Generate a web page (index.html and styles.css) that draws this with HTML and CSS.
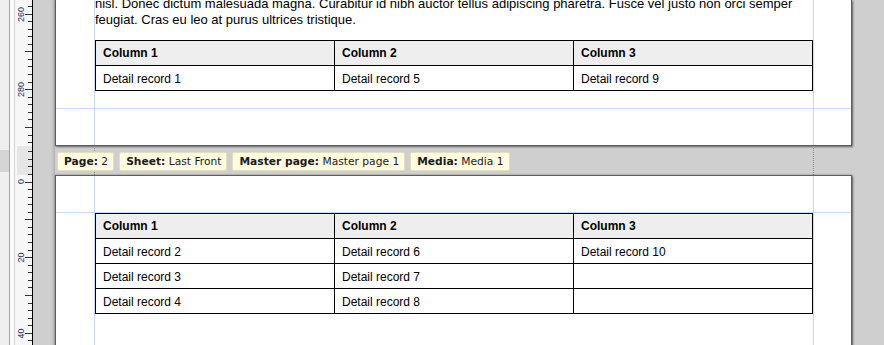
FILE: index.html
```html
<!DOCTYPE html>
<html lang="en">
<head>
<meta charset="utf-8">
<title>Report preview</title>
<link rel="stylesheet" href="styles.css">
</head>
<body>
<div class="app">
  <aside class="side">
    <div class="strip"><div class="strip-box"></div></div>
    <svg class="ruler" width="23" height="345" viewBox="0 0 23 345" xmlns="http://www.w3.org/2000/svg">
      <rect x="0" y="0" width="4" height="345" fill="#fbfbfb"/>
      <rect x="4" y="0" width="1" height="345" fill="#d3d3d3"/>
      <rect x="5" y="0" width="17" height="345" fill="#f7f7f7"/>
      <rect x="7" y="146" width="15" height="29" fill="#e6e6e6"/>
      <rect x="22" y="0" width="1" height="345" fill="#000"/>
      <g stroke="#333" stroke-width="1">
        <line x1="18" y1="6.5" x2="22" y2="6.5"/>
        <line x1="15" y1="14.5" x2="22" y2="14.5"/>
        <line x1="18" y1="21.5" x2="22" y2="21.5"/>
        <line x1="18" y1="29.5" x2="22" y2="29.5"/>
        <line x1="18" y1="36.5" x2="22" y2="36.5"/>
        <line x1="18" y1="44.5" x2="22" y2="44.5"/>
        <line x1="15" y1="51.5" x2="22" y2="51.5"/>
        <line x1="18" y1="59.5" x2="22" y2="59.5"/>
        <line x1="18" y1="66.5" x2="22" y2="66.5"/>
        <line x1="18" y1="74.5" x2="22" y2="74.5"/>
        <line x1="18" y1="82.5" x2="22" y2="82.5"/>
        <line x1="15" y1="89.5" x2="22" y2="89.5"/>
        <line x1="18" y1="97.5" x2="22" y2="97.5"/>
        <line x1="18" y1="104.5" x2="22" y2="104.5"/>
        <line x1="18" y1="112.5" x2="22" y2="112.5"/>
        <line x1="18" y1="119.5" x2="22" y2="119.5"/>
        <line x1="15" y1="127.5" x2="22" y2="127.5"/>
        <line x1="18" y1="135.5" x2="22" y2="135.5"/>
        <line x1="18" y1="142.5" x2="22" y2="142.5"/>
        <line x1="18" y1="151.5" x2="22" y2="151.5"/>
        <line x1="18" y1="159.5" x2="22" y2="159.5"/>
        <line x1="18" y1="166.5" x2="22" y2="166.5"/>
        <line x1="18" y1="174.5" x2="22" y2="174.5"/>
        <line x1="15" y1="182.5" x2="22" y2="182.5"/>
        <line x1="18" y1="189.5" x2="22" y2="189.5"/>
        <line x1="18" y1="197.5" x2="22" y2="197.5"/>
        <line x1="18" y1="204.5" x2="22" y2="204.5"/>
        <line x1="18" y1="212.5" x2="22" y2="212.5"/>
        <line x1="15" y1="219.5" x2="22" y2="219.5"/>
        <line x1="18" y1="227.5" x2="22" y2="227.5"/>
        <line x1="18" y1="234.5" x2="22" y2="234.5"/>
        <line x1="18" y1="242.5" x2="22" y2="242.5"/>
        <line x1="18" y1="250.5" x2="22" y2="250.5"/>
        <line x1="15" y1="257.5" x2="22" y2="257.5"/>
        <line x1="18" y1="265.5" x2="22" y2="265.5"/>
        <line x1="18" y1="272.5" x2="22" y2="272.5"/>
        <line x1="18" y1="280.5" x2="22" y2="280.5"/>
        <line x1="18" y1="287.5" x2="22" y2="287.5"/>
        <line x1="15" y1="295.5" x2="22" y2="295.5"/>
        <line x1="18" y1="303.5" x2="22" y2="303.5"/>
        <line x1="18" y1="310.5" x2="22" y2="310.5"/>
        <line x1="18" y1="318.5" x2="22" y2="318.5"/>
        <line x1="18" y1="325.5" x2="22" y2="325.5"/>
        <line x1="15" y1="333.5" x2="22" y2="333.5"/>
        <line x1="18" y1="340.5" x2="22" y2="340.5"/>
      </g>
      <g class="ruler-num" text-anchor="middle">
        <text transform="translate(14,14.5) rotate(-90)">260</text>
        <text transform="translate(14,89.5) rotate(-90)">280</text>
        <text transform="translate(14,181.5) rotate(-90)">0</text>
        <text transform="translate(14,257.5) rotate(-90)">20</text>
        <text transform="translate(14,333.5) rotate(-90)">40</text>
      </g>
    </svg>
  </aside>

  <main class="canvas">
    <section class="page page-first">
      <div class="page-body">
        <p class="lorem">nisl. Donec dictum malesuada magna. Curabitur id nibh auctor tellus adipiscing pharetra. Fusce vel justo non orci semper feugiat. Cras eu leo at purus ultrices tristique.</p>
        <div class="grid">
          <div class="cell head">Column 1</div>
          <div class="cell head">Column 2</div>
          <div class="cell head">Column 3</div>
          <div class="cell">Detail record 1</div>
          <div class="cell">Detail record 5</div>
          <div class="cell">Detail record 9</div>
        </div>
      </div>
    </section>

    <div class="gap">
      <span class="tip"><b>Page:</b> 2</span>
      <span class="tip"><b>Sheet:</b> Last Front</span>
      <span class="tip"><b>Master page:</b> Master page 1</span>
      <span class="tip"><b>Media:</b> Media 1</span>
    </div>

    <section class="page page-second">
      <div class="page-body">
        <div class="grid">
          <div class="cell head">Column 1</div>
          <div class="cell head">Column 2</div>
          <div class="cell head">Column 3</div>
          <div class="cell">Detail record 2</div>
          <div class="cell">Detail record 6</div>
          <div class="cell">Detail record 10</div>
          <div class="cell">Detail record 3</div>
          <div class="cell">Detail record 7</div>
          <div class="cell"></div>
          <div class="cell">Detail record 4</div>
          <div class="cell">Detail record 8</div>
          <div class="cell"></div>
        </div>
      </div>
    </section>
  </main>
</div>
</body>
</html>
```

FILE: styles.css
```css
* {
  box-sizing: border-box;
}

html,
body {
  margin: 0;
  height: 100%;
  overflow: hidden;
}

body {
  font-family: "Liberation Sans", Arial, sans-serif;
  background: #cfcfcf;
  color: #000;
}

.app {
  display: flex;
  height: 345px;
}

.side {
  display: flex;
  flex: none;
  width: 33px;
}

.strip {
  width: 10px;
  background: #efefef;
  border-right: 1px solid #a3a3a3;
  padding-top: 150px;
}

.strip-box {
  height: 22px;
  background: #d5d5d5;
}

.ruler {
  display: block;
  width: 23px;
  height: 345px;
}

.ruler-num {
  font-family: "Liberation Sans", Arial, sans-serif;
  font-size: 9px;
  fill: #1d2b5c;
}

.canvas {
  flex: 1;
  padding-left: 22px;
  background:
    linear-gradient(to right, #cfcfcf 0, #cfcfcf 18px, #b3b3b3 22px) no-repeat 0 0 / 22px 100%,
    #cfcfcf;
}

.page {
  width: 797px;
  border: 1px solid #5e5e5e;
  box-shadow: 0 0 2px rgba(0, 0, 0, 0.3), 1px 1px 2px rgba(0, 0, 0, 0.45);
}

.page-first {
  height: 146px;
  border-top: none;
  overflow: hidden;
  background:
    linear-gradient(#c3dafa, #c3dafa) no-repeat 38px 0 / 1px 100%,
    linear-gradient(#c3dafa, #c3dafa) no-repeat 757px 0 / 1px 100%,
    linear-gradient(#c3dafa, #c3dafa) no-repeat 0 108px / 100% 1px,
    #fff;
}

.page-second {
  height: 200px;
  background:
    linear-gradient(#c3dafa, #c3dafa) no-repeat 38px 0 / 1px 100%,
    linear-gradient(#c3dafa, #c3dafa) no-repeat 757px 0 / 1px 100%,
    linear-gradient(#c3dafa, #c3dafa) no-repeat 0 36px / 100% 1px,
    #fff;
}

.page-body {
  padding: 0 38px 0 39px;
}

.page-second .page-body {
  padding-top: 37px;
}

.lorem {
  margin: -4px 0 0;
  font-size: 13px;
  line-height: 16px;
}

.grid {
  display: grid;
  grid-template-columns: repeat(3, 1fr);
  border-left: 1px solid #000;
  border-top: 1px solid #000;
}

.page-first .grid {
  margin-top: 12px;
}

.cell {
  height: 25px;
  padding: 2px 0 0 7px;
  border-right: 1px solid #000;
  border-bottom: 1px solid #000;
  font-size: 12px;
  line-height: 22px;
  white-space: nowrap;
}

.head {
  padding-top: 1px;
  line-height: 23px;
  background: #eeeeee;
  font-weight: bold;
}

.gap {
  display: flex;
  align-items: flex-start;
  gap: 5px;
  height: 29px;
  padding: 6px 0 0 2px;
  background:
    repeating-linear-gradient(to bottom, #8c8c8c 0 1px, transparent 1px 2px) no-repeat 39px 0 / 1px 100%,
    repeating-linear-gradient(to bottom, #8c8c8c 0 1px, transparent 1px 2px) no-repeat 758px 0 / 1px 100%;
}

.tip {
  height: 19px;
  padding: 1px 5px 0 6px;
  background: #fffbdf;
  border: 1px solid #e3dfbd;
  border-radius: 2px;
  font-family: "DejaVu Sans", Verdana, sans-serif;
  font-size: 10.7px;
  line-height: 16px;
  color: #1a1a1a;
  white-space: nowrap;
}

.tip b {
  font-weight: bold;
}
```
